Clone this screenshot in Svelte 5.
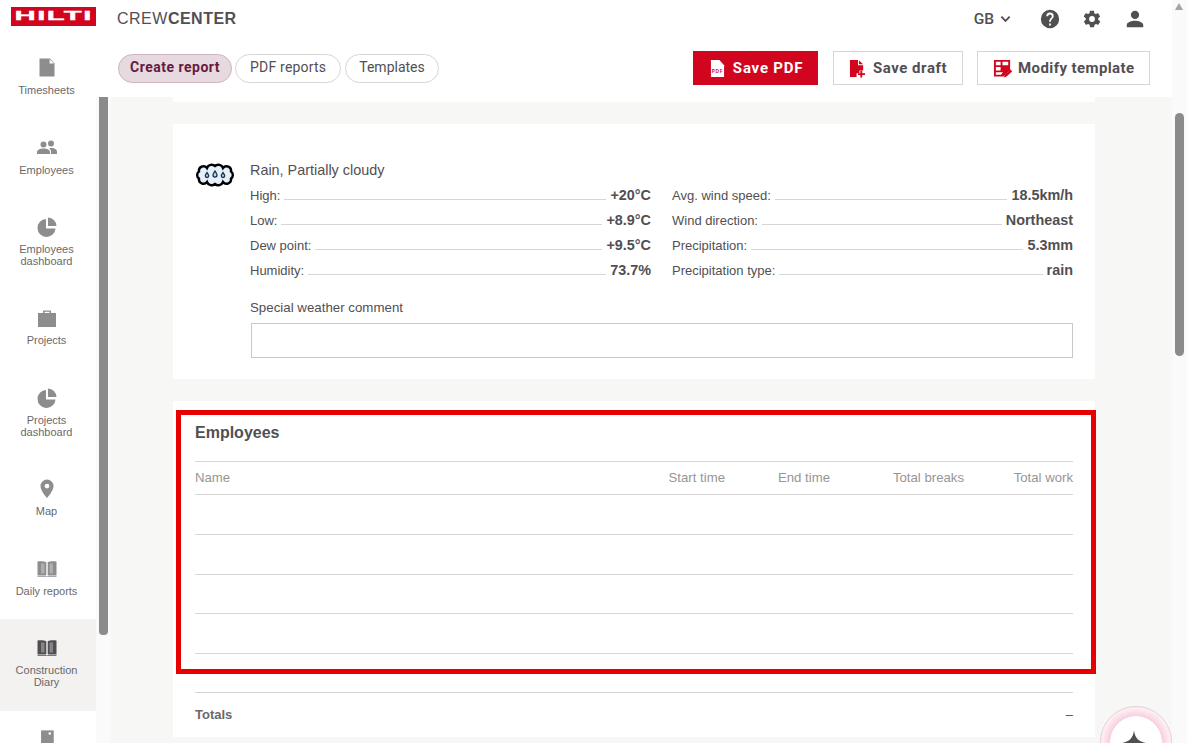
<script>
  const nav = [
    { label: "Timesheets", icon: "file", h: 80 },
    { label: "Employees", icon: "people", h: 79 },
    { label: ["Employees", "dashboard"], icon: "pie", h: 91 },
    { label: "Projects", icon: "case", h: 80 },
    { label: ["Projects", "dashboard"], icon: "pie", h: 91 },
    { label: "Map", icon: "pin", h: 80 },
    { label: "Daily reports", icon: "book", h: 79 },
    { label: ["Construction", "Diary"], icon: "book", h: 92, active: true },
    { label: "", icon: "photo", h: 40 },
  ];

  const weatherLeft = [
    ["High:", "+20°C"],
    ["Low:", "+8.9°C"],
    ["Dew point:", "+9.5°C"],
    ["Humidity:", "73.7%"],
  ];
  const weatherRight = [
    ["Avg. wind speed:", "18.5km/h"],
    ["Wind direction:", "Northeast"],
    ["Precipitation:", "5.3mm"],
    ["Precipitation type:", "rain"],
  ];
</script>

{#snippet navIcon(name)}
  <svg class="nav-icon" viewBox="0 0 24 24" width="24" height="24">
    {#if name === "file"}
      <path d="M4.500 2.500h10.500l4.500 5V20.500h-15z" />
      <path d="M14.600 3 18.800 7.600h-4.200z" fill="#fff" />
    {:else if name === "people"}
      <circle cx="8.500" cy="8.500" r="3" />
      <circle cx="16" cy="7.500" r="3" />
      <path d="M2 18v-2c0-2 3-3.600 6.500-3.600S15 14 15 16v2z" />
      <path d="M16 18v-2.500c0-1.300-.7-2.300-1.800-3.100.7-.2 1.300-.3 2-.3 3 0 5.800 1.400 5.800 3.400v2.500z" />
    {:else if name === "pie"}
      <path d="M11 4v9.500h9.500A9 9 0 1 1 11 4z" />
      <path d="M13 2.500a9 9 0 0 1 8.500 8.500H13z" />
    {:else if name === "case"}
      <path d="M8 7V4.500h8V7h5v14H3V7zM9.500 7h5V5.800h-5z" fill-rule="evenodd" />
    {:else if name === "pin"}
      <path d="M12 2.500a6.500 6.500 0 0 0-6.500 6.500C5.500 14 12 21 12 21s6.500-7 6.500-12A6.500 6.500 0 0 0 12 2.500zm0 9a2.400 2.400 0 1 1 0-4.800 2.400 2.400 0 0 1 0 4.800z" fill-rule="evenodd" />
    {:else if name === "book"}
      <path d="M2.500 4.500C5 4 9 4 11.300 5.200V18H2.500zM21.500 4.500C19 4 15 4 12.700 5.200V18h8.800z" />
      <path d="M6 6.500h3.500V16.500H6zM14.500 6.500H18V16.500h-3.500z" fill="#fff" fill-opacity=".3" />
      <path d="M2.500 18.500h8.300l1.200.9 1.200-.9h8.300v1.300H2.500z" />
    {:else}
      <path d="M4.500 3h16v18h-16z" />
      <circle cx="15.500" cy="7" r="1.600" fill="#fff" />
    {/if}
  </svg>
{/snippet}

<div class="app">
  <div class="shell">
    <header class="topbar">
      <div class="brand">
        <div class="logo"><span>HILTI</span></div>
        <div class="product">CREW<b>CENTER</b></div>
      </div>
      <div class="top-right">
        <button class="lang">GB
          <svg viewBox="0 0 12 8" width="11" height="8"><path d="M1.500 1.500 6 6l4.500-4.500" fill="none" stroke="#524f53" stroke-width="2" /></svg>
        </button>
        <svg class="top-icon help" viewBox="0 0 24 24" width="22" height="22"><path d="M12 2a10 10 0 1 0 0 20 10 10 0 0 0 0-20zm1 17h-2v-2h2zm2.100-7.700-.9.9c-.8.7-1.200 1.300-1.200 2.800h-2v-.5c0-1.100.4-2.100 1.200-2.800l1.200-1.300c.4-.3.600-.8.600-1.400a2 2 0 0 0-4 0H8a4 4 0 0 1 8 0c0 .9-.4 1.700-.9 2.300z" fill-rule="evenodd" /></svg>
        <svg class="top-icon gear" viewBox="0 0 24 24" width="20" height="20"><path d="M19.400 13c.1-.3.100-.7.100-1s0-.7-.1-1l2.100-1.600c.2-.2.200-.4.100-.6l-2-3.500c-.1-.2-.4-.3-.6-.2l-2.500 1c-.5-.4-1.100-.7-1.700-1l-.4-2.700c0-.2-.2-.4-.5-.4h-4c-.2 0-.4.200-.5.400l-.4 2.700c-.6.200-1.100.6-1.700 1l-2.500-1c-.2-.1-.5 0-.6.200l-2 3.500c-.1.200-.1.500.1.600L4.600 11c0 .3-.1.700-.1 1s0 .7.100 1l-2.100 1.600c-.2.200-.2.400-.1.600l2 3.500c.1.200.4.300.6.200l2.500-1c.5.400 1.100.7 1.700 1l.4 2.700c0 .2.200.4.500.4h4c.2 0 .5-.2.500-.4l.4-2.700c.6-.2 1.100-.6 1.700-1l2.500 1c.2.1.5 0 .6-.2l2-3.500c.1-.2.100-.5-.1-.6zM12 15.500a3.500 3.500 0 1 1 0-7 3.500 3.500 0 0 1 0 7z" fill-rule="evenodd" /></svg>
        <svg class="top-icon user" viewBox="0 0 24 24" width="22" height="22"><path d="M12 12a4.500 4.500 0 1 0 0-9 4.500 4.500 0 0 0 0 9zm0 2c-3.300 0-9 1.600-9 4.500V21h18v-2.500c0-2.900-5.700-4.500-9-4.500z" /></svg>
      </div>
    </header>

    <div class="body">
      <aside class="sidebar">
        <nav class="nav">
          {#each nav as item}
            <div class="nav-item" class:active={item.active} style="height: {item.h}px">
              {@render navIcon(item.icon)}
              <div class="nav-label">
                {#if Array.isArray(item.label)}
                  {item.label[0]}<br />{item.label[1]}
                {:else}
                  {item.label}
                {/if}
              </div>
            </div>
          {/each}
        </nav>
        <div class="side-scroll"><div class="side-thumb"></div></div>
      </aside>

      <main class="main">
        <div class="toolbar">
          <div class="tabs">
            <button class="tab selected">Create report</button>
            <button class="tab">PDF reports</button>
            <button class="tab">Templates</button>
          </div>
          <div class="actions">
            <button class="btn primary">
              <svg viewBox="0 0 16 20" width="15" height="19"><path d="M1 1h9l5 5.500V19H1z" fill="#fff" /><text x="8" y="15" text-anchor="middle" class="pdf-mark">PDF</text></svg>
              Save PDF
            </button>
            <button class="btn">
              <svg viewBox="0 0 18 20" width="17" height="19"><path d="M1 1h8.500v5.500H15V12h-4v3H8v4H1z" fill="#d2051e" /><path d="M10.500 1.500 15 5.500h-4.500z" fill="#d2051e" /><path d="M12 12.500h2v2.500h3v2h-3v2.500h-2V17H9.500v-2H12z" fill="#d2051e" /></svg>
              Save draft
            </button>
            <button class="btn">
              <svg viewBox="0 0 20 20" width="19" height="19"><path d="M1 1h17v10.500L11 18.500H1z" fill="#d2051e" /><path d="M3 3h5v3.500H3zM10 3h6v3.500h-6zM3 8.500h5V12H3zM3 14h7.500l-2 2.500H3z" fill="#fff" /><path d="M11.500 19.500l.8-3 6-5.500 2 2-6 5.500z" fill="#d2051e" /></svg>
              Modify template
            </button>
          </div>
        </div>

        <div class="page">
          <div class="card stub"></div>

          <section class="card weather">
            <svg class="cloud" viewBox="0 0 40 26" width="40" height="26">
              <path d="M4 8.500A4.500 4.500 0 0 1 12 5 5 5 0 0 1 20 3 5 5 0 0 1 28 5 4.500 4.500 0 0 1 36 8.500 4.200 4.200 0 0 1 36 15.500 4.500 4.500 0 0 1 28 19 5 5 0 0 1 20 21 5 5 0 0 1 12 19 4.500 4.500 0 0 1 4 15.500 4.200 4.200 0 0 1 4 8.500z" fill="#e4f1fb" stroke="#000" stroke-width="2.400" />
              <path d="M12 9.500c1 1.500 1.700 2.400 1.700 3.300a1.700 1.700 0 0 1-3.400 0c0-.9.700-1.800 1.700-3.300zM20 8c1.200 1.800 2 2.900 2 4.100a2 2 0 0 1-4 0C18 10.900 18.800 9.800 20 8zM28 9.500c1 1.500 1.700 2.400 1.700 3.300a1.700 1.700 0 0 1-3.400 0c0-.9.700-1.800 1.700-3.300z" fill="#bcd6ea" stroke="#17324d" stroke-width="1.300" />
            </svg>
            <div class="weather-body">
              <div class="summary">Rain, Partially cloudy</div>
              <div class="stats">
                <div class="stat-col">
                  {#each weatherLeft as [k, v]}
                    <div class="stat"><span>{k}</span><i></i><strong>{v}</strong></div>
                  {/each}
                </div>
                <div class="stat-col">
                  {#each weatherRight as [k, v]}
                    <div class="stat"><span>{k}</span><i></i><strong>{v}</strong></div>
                  {/each}
                </div>
              </div>
              <div class="comment-label">Special weather comment</div>
              <div class="comment"></div>
            </div>
          </section>

          <section class="card staff">
            <h2>Employees</h2>
            <div class="row head">
              <span class="name">Name</span>
              <span class="start">Start time</span>
              <span class="end">End time</span>
              <span class="breaks">Total breaks</span>
              <span class="work">Total work</span>
            </div>
            {#each [0, 1, 2, 3, 4] as r}
              <div class="row empty" data-row={r}></div>
            {/each}
            <div class="totals"><span>Totals</span><span class="dash">–</span></div>
            <div class="highlight"></div>
          </section>
        </div>

        <div class="assistant">
          <svg viewBox="0 0 24 24" width="26" height="26"><path d="M12 .5c1 6.500 3.500 10 11 11.500-7.500 1.500-10 5-11 11.500C11 17 8.500 13.500 1 12c7.500-1.500 10-5 11-11.500z" fill="#524f53" /></svg>
        </div>
      </main>
    </div>
  </div>

  <div class="page-scroll"><div class="page-arrow"></div><div class="page-thumb"></div></div>
</div>

<style>
  :global(body) {
    margin: 0;
    overflow: hidden;
  }

  .app {
    width: 1187px;
    height: 743px;
    overflow: hidden;
    background: #fff;
    font-family: "Liberation Sans", Arial, sans-serif;
    color: #524f53;
    display: flex;
  }

  .shell {
    flex: 1;
    min-width: 0;
    display: flex;
    flex-direction: column;
  }

  button {
    font-family: Roboto, Arial, sans-serif;
    cursor: pointer;
  }

  .topbar {
    height: 34px;
    display: flex;
    justify-content: space-between;
    flex: none;
  }

  .brand {
    display: flex;
    padding-left: 11px;
  }

  .logo {
    width: 85px;
    height: 19px;
    margin-top: 7px;
    background: #d2051e;
    display: flex;
    align-items: center;
    justify-content: center;
    overflow: hidden;
  }

  .logo span {
    color: #fff;
    font: 900 12.500px/1 "Liberation Sans", Arial, sans-serif;
    letter-spacing: 0.6px;
    transform: scaleX(2.350);
    -webkit-text-stroke: 0.300px #fff;
  }

  .product {
    margin: 10px 0 0 21px;
    font-size: 16px;
    line-height: 18px;
    letter-spacing: 0.5px;
    color: #524f53;
  }

  .top-right {
    display: flex;
    align-items: center;
    padding: 4px 26px 0 0;
  }

  .lang {
    display: flex;
    align-items: center;
    gap: 6px;
    border: 0;
    background: none;
    padding: 0;
    font-size: 15.500px;
    font-weight: 500;
    color: #524f53;
    margin-right: 28px;
  }

  .top-icon {
    fill: #524f53;
    display: block;
  }

  .help {
    margin-right: 21px;
  }

  .gear {
    margin-right: 22px;
  }

  .body {
    flex: 1;
    min-height: 0;
    display: flex;
  }

  .sidebar {
    width: 111px;
    flex: none;
    display: flex;
  }

  .nav {
    width: 96px;
    padding-top: 5px;
    flex: none;
  }

  .nav-item {
    display: flex;
    flex-direction: column;
    align-items: center;
    padding: 17px 3px 0 0;
    box-sizing: border-box;
  }

  .nav-item.active {
    background: #f3f2f0;
  }

  .nav-item.active .nav-icon {
    fill: #524f53;
  }

  .nav-icon {
    fill: #8f8c8f;
    display: block;
  }

  .nav-label {
    margin-top: 4px;
    font-size: 11px;
    line-height: 12px;
    text-align: center;
    color: #6b686b;
  }

  .side-scroll {
    width: 15px;
    margin-top: 63px;
    padding-left: 3px;
    box-sizing: border-box;
    background: #fafafa;
  }

  .side-thumb {
    width: 9px;
    height: 538px;
    background: #8b8b8b;
    border-radius: 0 0 4px 4px;
  }

  .main {
    flex: 1;
    min-width: 0;
    display: flex;
    flex-direction: column;
    position: relative;
  }

  .toolbar {
    height: 63px;
    flex: none;
    display: flex;
    justify-content: space-between;
    padding: 17px 22px 0 7px;
    box-sizing: border-box;
  }

  .tabs {
    display: flex;
    gap: 3px;
    height: 29px;
    margin-top: 3px;
  }

  .tab {
    height: 29px;
    border: 1px solid #d7d5d5;
    border-radius: 15px;
    background: #fff;
    padding: 0 14px 4px;
    font-size: 14px;
    letter-spacing: 0.2px;
    color: #524f53;
  }

  .tab:last-child {
    margin-left: 1px;
    padding: 0 13px 4px;
    letter-spacing: 0;
  }

  .tab.selected {
    background: #e7d9e0;
    border-color: #cfb3c0;
    color: #671a3d;
    font-weight: 700;
    letter-spacing: 0.5px;
    padding: 0 11px 4px;
  }

  .actions {
    display: flex;
    gap: 14.500px;
  }

  .btn {
    height: 34px;
    display: flex;
    align-items: center;
    gap: 7px;
    border: 1px solid #d7d5d5;
    background: #fff;
    padding: 0 14.500px 0 15px;
    font-size: 15px;
    font-weight: 700;
    letter-spacing: 0.55px;
    color: #524f53;
  }

  .btn:last-child {
    gap: 6px;
    letter-spacing: 0.4px;
  }

  .btn.primary {
    background: #d2051e;
    border-color: #d2051e;
    color: #fff;
    gap: 8px;
    padding: 0 14px 0 16px;
    letter-spacing: 0.8px;
  }

  .pdf-mark {
    font: 700 5px "Liberation Sans", Arial, sans-serif;
    fill: #d2051e;
  }

  .page {
    flex: 1;
    min-height: 0;
    background: #f7f7f5;
    padding: 0 77px 0 62px;
    overflow: hidden;
  }

  .page-scroll {
    width: 15px;
    flex: none;
    background: #fafafa;
    position: relative;
  }

  .card {
    background: #fff;
  }

  .stub {
    height: 5px;
    margin-bottom: 22px;
  }

  .weather {
    height: 255px;
    display: flex;
    padding: 40px 22px 0;
    box-sizing: border-box;
    margin-bottom: 22px;
  }

  .cloud {
    flex: none;
    margin: -1px 16px 0 0;
  }

  .weather-body {
    flex: 1;
    min-width: 0;
  }

  .summary {
    font-size: 14.400px;
    line-height: 15px;
    margin: -1px 0 10px -1px;
  }

  .stats {
    display: grid;
    grid-template-columns: 401px 401px;
    column-gap: 21px;
    margin-left: -1px;
  }

  .stat {
    display: flex;
    align-items: baseline;
    height: 25px;
    font-size: 13px;
    line-height: 15px;
  }

  .stat i {
    flex: 1;
    border-bottom: 1px solid #d7d5d5;
    margin: 0 4px;
  }

  .stat strong {
    font-size: 14.400px;
  }

  .comment-label {
    margin: 12px 0 0 -1px;
    font-size: 13.300px;
    line-height: 15px;
  }

  .comment {
    margin-top: 8px;
    height: 33px;
    border: 1px solid #c9c7c7;
  }

  .staff {
    position: relative;
    padding: 0 22px;
    height: 336px;
  }

  h2 {
    margin: 0;
    padding-top: 23px;
    height: 37px;
    font-size: 16px;
    line-height: 18px;
    color: #524f53;
  }

  .row {
    border-top: 1px solid #d7d5d5;
    display: flex;
    box-sizing: border-box;
  }

  .row.empty {
    height: 39.750px;
  }

  .row.head {
    height: 33px;
    padding-bottom: 2px;
    align-items: center;
    font-size: 13.200px;
    color: #979597;
  }

  .name {
    flex: 1;
  }

  .start,
  .end,
  .breaks,
  .work {
    text-align: right;
  }

  .start {
    width: 100px;
  }

  .end {
    width: 105px;
  }

  .breaks {
    width: 134px;
  }

  .work {
    width: 109px;
  }

  .totals {
    margin-top: -1px;
    border-top: 1px solid #d7d5d5;
    display: flex;
    justify-content: space-between;
    align-items: center;
    height: 44px;
    font-size: 13px;
    font-weight: 700;
    color: #6b686b;
  }

  .dash {
    font-weight: 400;
    color: #524f53;
  }

  .highlight {
    position: absolute;
    left: 3px;
    top: 9px;
    width: 920px;
    height: 264px;
    box-sizing: border-box;
    border: 5px solid #e60000;
    pointer-events: none;
  }

  .page-arrow {
    position: absolute;
    top: 3px;
    left: 3px;
    width: 0;
    height: 0;
    border-left: 4.500px solid transparent;
    border-right: 4.500px solid transparent;
    border-bottom: 7px solid #a3a3a3;
  }

  .page-thumb {
    position: absolute;
    top: 113px;
    left: 3px;
    width: 9px;
    height: 243px;
    border-radius: 5px;
    background: #8b8b8b;
  }

  .assistant {
    position: absolute;
    left: 989px;
    top: 672px;
    width: 72px;
    height: 72px;
    border-radius: 50%;
    border: 1px solid #e5cfd8;
    box-sizing: border-box;
    background: radial-gradient(circle, #fff 0 25.500px, #f9cfe0 26px, #fdf3f7 35px);
    display: flex;
    justify-content: center;
    padding: 23px 4px 0 0;
  }
</style>
